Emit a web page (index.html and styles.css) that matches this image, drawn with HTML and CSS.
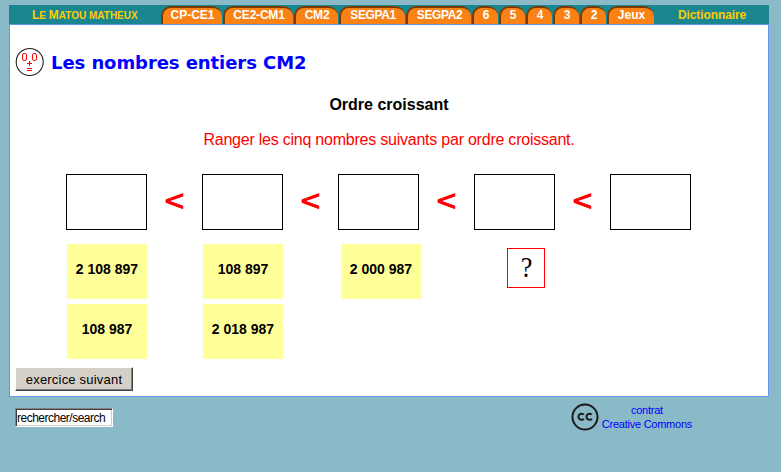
FILE: index.html
```html
<!DOCTYPE html>
<html lang="fr">
<head>
<meta charset="utf-8">
<title>Les nombres entiers CM2</title>
<link rel="stylesheet" href="styles.css">
</head>
<body>
<nav class="nav">
  <a class="home"><span class="cap">L</span>E <span class="cap">M</span>ATOU MATHEUX</a>
  <div class="tabs">
    <a class="tab t61">CP-CE1</a>
    <a class="tab t70">CE2-CM1</a>
    <a class="tab t44">CM2</a>
    <a class="tab t66">SEGPA1</a>
    <a class="tab t65">SEGPA2</a>
    <a class="tab">6</a>
    <a class="tab">5</a>
    <a class="tab">4</a>
    <a class="tab">3</a>
    <a class="tab">2</a>
    <a class="tab t47">Jeux</a>
  </div>
  <a class="dict">Dictionnaire</a>
</nav>
<main class="panel">
  <header class="title">
    <svg class="face" width="30" height="30" viewBox="0 0 30 30">
      <circle cx="14.7" cy="15" r="13.5" fill="#fff" stroke="#222" stroke-width="1.1"/>
      <g fill="none" stroke="#f00" stroke-width="1">
        <rect x="7.5" y="6.5" width="4" height="7" rx="1.6"/>
        <rect x="17.5" y="6.5" width="4" height="7" rx="1.6"/>
        <path d="M12 16.5h5M14.5 14v5M12 21.5h5M12 23.5h5"/>
      </g>
    </svg>
    <h1>Les nombres entiers CM2</h1>
  </header>
  <h2>Ordre croissant</h2>
  <p class="consigne">Ranger les cinq nombres suivants par ordre croissant.</p>
  <div class="slots">
    <div class="slot"></div><div class="lt">&lt;</div>
    <div class="slot"></div><div class="lt">&lt;</div>
    <div class="slot"></div><div class="lt">&lt;</div>
    <div class="slot"></div><div class="lt">&lt;</div>
    <div class="slot"></div>
  </div>
  <div class="cards">
    <div class="card">2 108 897</div>
    <div class="card">108 897</div>
    <div class="card third">2 000 987</div>
    <div class="help"><span class="mark">?</span></div>
    <div class="card">108 987</div>
    <div class="card">2 018 987</div>
  </div>
  <button class="next">exercice suivant</button>
</main>
<footer class="footer">
  <input class="search" value="rechercher/search">
  <div class="licence">
    <svg width="28" height="28" viewBox="0 0 28 28">
      <circle cx="14" cy="14" r="12.5" fill="none" stroke="#1a1a1a" stroke-width="2"/>
      <g fill="none" stroke="#1a1a1a" stroke-width="2">
        <path d="M12.9 11.7A3.1 3.1 0 1 0 12.9 15.8M20.9 11.7A3.1 3.1 0 1 0 20.9 15.8"/>
      </g>
    </svg>
    <a>contrat<br>Creative Commons</a>
  </div>
</footer>
</body>
</html>
```
FILE: styles.css
```css
* { box-sizing: border-box; }
body {
  margin: 0;
  padding: 5px 12px 0 9px;
  height: 472px;
  background: #8abac8;
  font-family: "Liberation Sans", Arial, sans-serif;
  overflow: hidden;
}
.nav {
  display: flex;
  height: 19px;
  background: #1a8790;
  color: #fc0;
  font-size: 12px;
  font-weight: bold;
  line-height: 20px;
  white-space: nowrap;
}
.home { width: 152px; padding-left: 23px; font-size: 10px; }
.cap { font-size: 12px; }
.tabs { display: flex; gap: 1px; padding-top: 1px; }
.tab {
  width: 26px;
  height: 18px;
  border-top: 2px solid #7a3a00;
  border-left: 2px solid #7a3a00;
  border-radius: 10px 10px 0 0;
  background: #fa8214;
  color: #fff;
  line-height: 15px;
  text-align: center;
}
.t61 { width: 61px; }
.t70 { width: 70px; letter-spacing: -0.2px; }
.t44 { width: 44px; letter-spacing: -0.2px; }
.t66 { width: 66px; letter-spacing: -0.4px; }
.t65 { width: 65px; letter-spacing: -0.4px; }
.t47 { width: 47px; }
.dict { margin-left: 24px; letter-spacing: -0.1px; }
.panel {
  height: 373px;
  border: 1px solid #6495ed;
  background: #fff;
}
.title { display: flex; align-items: center; gap: 6px; height: 30px; margin: 22px 0 0 5px; }
h1 {
  margin: 1px 0 0;
  color: #00f;
  font: bold 18px/30px "DejaVu Sans", Verdana, sans-serif;
  letter-spacing: -0.07px;
}
h2 { margin: 18px 0 0; font-size: 16px; line-height: 20px; text-align: center; }
.consigne { margin: 15px 0 0; color: #f00; font-size: 16px; letter-spacing: -0.23px; line-height: 20px; text-align: center; }
.slots { display: flex; margin: 24px 0 0 56px; height: 56px; }
.slot { width: 81px; border: 1px solid #000; }
.lt {
  width: 55px;
  color: #f00;
  font: bold 28px/54px "DejaVu Sans", Verdana, sans-serif;
  text-align: center;
}
.cards {
  display: grid;
  grid-template-columns: repeat(4, 136px);
  grid-auto-rows: 55px;
  row-gap: 5px;
  margin: 14px 0 0 57px;
}
.card {
  width: 80px;
  background: #ff9;
  font-size: 14px;
  font-weight: bold;
  line-height: 50px;
  text-align: center;
}
.third { margin-left: 2px; }
.help {
  width: 38px;
  height: 40px;
  margin: 4px 0 0 32px;
  border: 1px solid #f00;
  font: 29px/36px "Liberation Serif", serif;
  text-align: center;
}
.mark { display: inline-block; transform: scaleX(0.9); }
.next {
  display: block;
  width: 118px;
  height: 24px;
  margin: 8px 0 0 5px;
  padding: 1px 0 0;
  border: 1px solid;
  border-color: #fff #404040 #404040 #fff;
  box-shadow: inset -1px -1px #808080;
  background: #d4d0c8;
  color: #000;
  font: 13px/21px "Liberation Sans", Arial, sans-serif;
  letter-spacing: 0.2px;
}
.footer { display: flex; align-items: flex-start; justify-content: space-between; padding: 6px 77px 0 6px; }
.search {
  width: 98px;
  height: 19px;
  margin-top: 5px;
  padding: 0;
  border: 1px solid;
  border-color: #808080 #fff #fff #808080;
  border-radius: 0;
  box-shadow: inset 1px 1px #404040, inset -1px -1px #d4d0c8;
  background: #fff;
  color: #000;
  font: 12px/17px "Liberation Sans", Arial, sans-serif;
  letter-spacing: -0.5px;
  text-indent: 1px;
}
.licence { display: flex; gap: 3px; color: #00f; font-size: 11px; letter-spacing: -0.25px; line-height: 14px; text-align: center; white-space: nowrap; }
```
